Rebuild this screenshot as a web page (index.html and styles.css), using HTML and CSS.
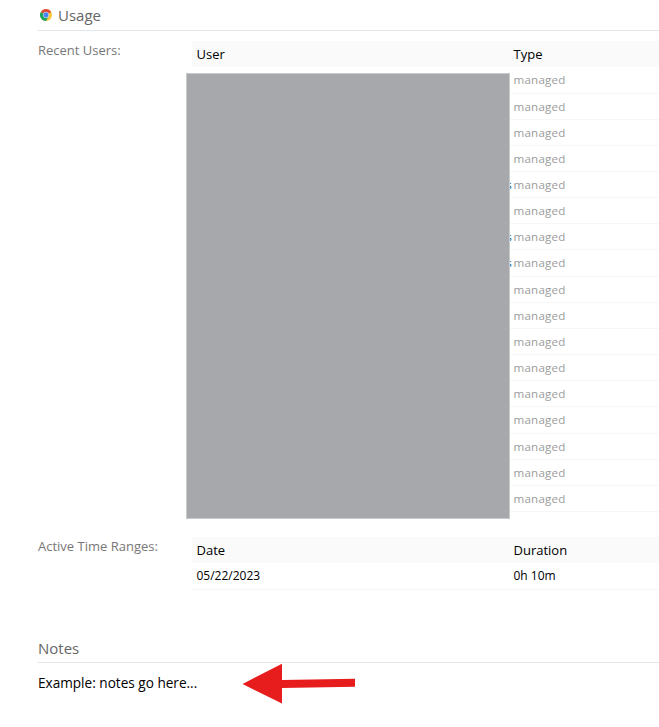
FILE: index.html
```html
<!DOCTYPE html>
<html lang="en">
<head>
<meta charset="utf-8">
<title>Usage</title>
<link rel="stylesheet" href="styles.css">
</head>
<body>
<main class="page">
  <h2 class="heading usage">
    <svg class="chrome" viewBox="0 0 12 12"><circle cx="6" cy="6" r="6" fill="#fbc93d"/><path d="M6 6 .8 3A6 6 0 0 1 11.2 3Z" fill="#de4d3c"/><path d="M6 6 .8 3A6 6 0 0 0 6 12L8.5 7.5Z" fill="#1da362"/><circle cx="6" cy="6" r="2.9" fill="#d5e2f8"/><circle cx="6" cy="6" r="2.4" fill="#4285f4"/></svg>
    <span>Usage</span>
  </h2>
  <section class="field users">
    <div class="label">Recent Users:</div>
    <div class="table">
      <div class="row head"><span>User</span><span>Type</span></div>
      <div class="row"><span></span><span>managed</span></div>
      <div class="row"><span></span><span>managed</span></div>
      <div class="row"><span></span><span>managed</span></div>
      <div class="row"><span></span><span>managed</span></div>
      <div class="row"><span class="link">s</span><span>managed</span></div>
      <div class="row"><span></span><span>managed</span></div>
      <div class="row"><span class="link">s</span><span>managed</span></div>
      <div class="row"><span class="link">s</span><span>managed</span></div>
      <div class="row"><span></span><span>managed</span></div>
      <div class="row"><span></span><span>managed</span></div>
      <div class="row"><span></span><span>managed</span></div>
      <div class="row"><span></span><span>managed</span></div>
      <div class="row"><span></span><span>managed</span></div>
      <div class="row"><span></span><span>managed</span></div>
      <div class="row"><span></span><span>managed</span></div>
      <div class="row"><span></span><span>managed</span></div>
      <div class="row"><span></span><span>managed</span></div>
      <div class="cover"></div>
    </div>
  </section>
  <section class="field times">
    <div class="label">Active Time Ranges:</div>
    <div class="table">
      <div class="row head"><span>Date</span><span>Duration</span></div>
      <div class="row dark"><span>05/22/2023</span><span>0h 10m</span></div>
    </div>
  </section>
  <h2 class="heading notes">Notes</h2>
  <div class="note">
    <span class="note-text">Example: notes go here...</span>
    <svg class="arrow" viewBox="0 0 114 42"><path d="M.5 21 40 .8V17L113 15.8V23.8L40 25V40.5Z" fill="#e71d1d"/></svg>
  </div>
</main>
</body>
</html>
```
FILE: styles.css
```css
* { box-sizing: border-box; }
body {
  margin: 0;
  background: #fff;
  color: #000;
  font: 13px/20px "Open Sans", "Noto Sans", sans-serif;
  overflow: hidden;
}
.page { height: 727px; padding-left: 38px; }
.heading {
  display: flex;
  align-items: center;
  margin: 0;
  height: 31px;
  border-bottom: 1px solid #e3e6e9;
  color: #666;
  font-size: 15px;
  font-weight: 400;
}
.chrome { width: 12px; height: 12px; margin: 0 6px 0 2px; }
.field { display: flex; }
.users { padding-top: 10px; }
.times { padding-top: 25px; }
.label { width: 154px; flex: none; margin-top: -1px; color: #777; }
.table { position: relative; flex: 1; }
.row {
  display: grid;
  grid-template-columns: 317px 1fr;
  height: 26.16px;
  padding-left: 4.5px;
  border-bottom: 1px solid #f7f7f7;
  color: #9c9c9c;
  font-size: 11.6px;
  letter-spacing: .2px;
  line-height: 25.6px;
}
.head {
  height: 26px;
  border: 0;
  background: #fafafa;
  color: #000;
  font-size: 13px;
  letter-spacing: 0;
  line-height: 27px;
}
.head + .row { height: 26.5px; }
.head + .row.dark { height: 27px; line-height: 25px; }
.dark { color: #000; font-size: 12px; letter-spacing: 0; }
.link { color: #0b5fa5; text-align: right; padding-right: 1.5px; }
.cover {
  position: absolute;
  left: -6px;
  top: 32px;
  width: 324px;
  height: 446px;
  background: #a7a8ac;
  border: 1px solid #c9cacc;
}
.notes { margin-top: 40px; height: 33px; padding-top: 4px; }
.note { display: flex; align-items: flex-start; padding-top: 10px; }
.note-text { width: 159px; flex: none; font-size: 13.6px; white-space: nowrap; }
.arrow { width: 114px; height: 42px; margin: -10px 0 0 45px; }
```
